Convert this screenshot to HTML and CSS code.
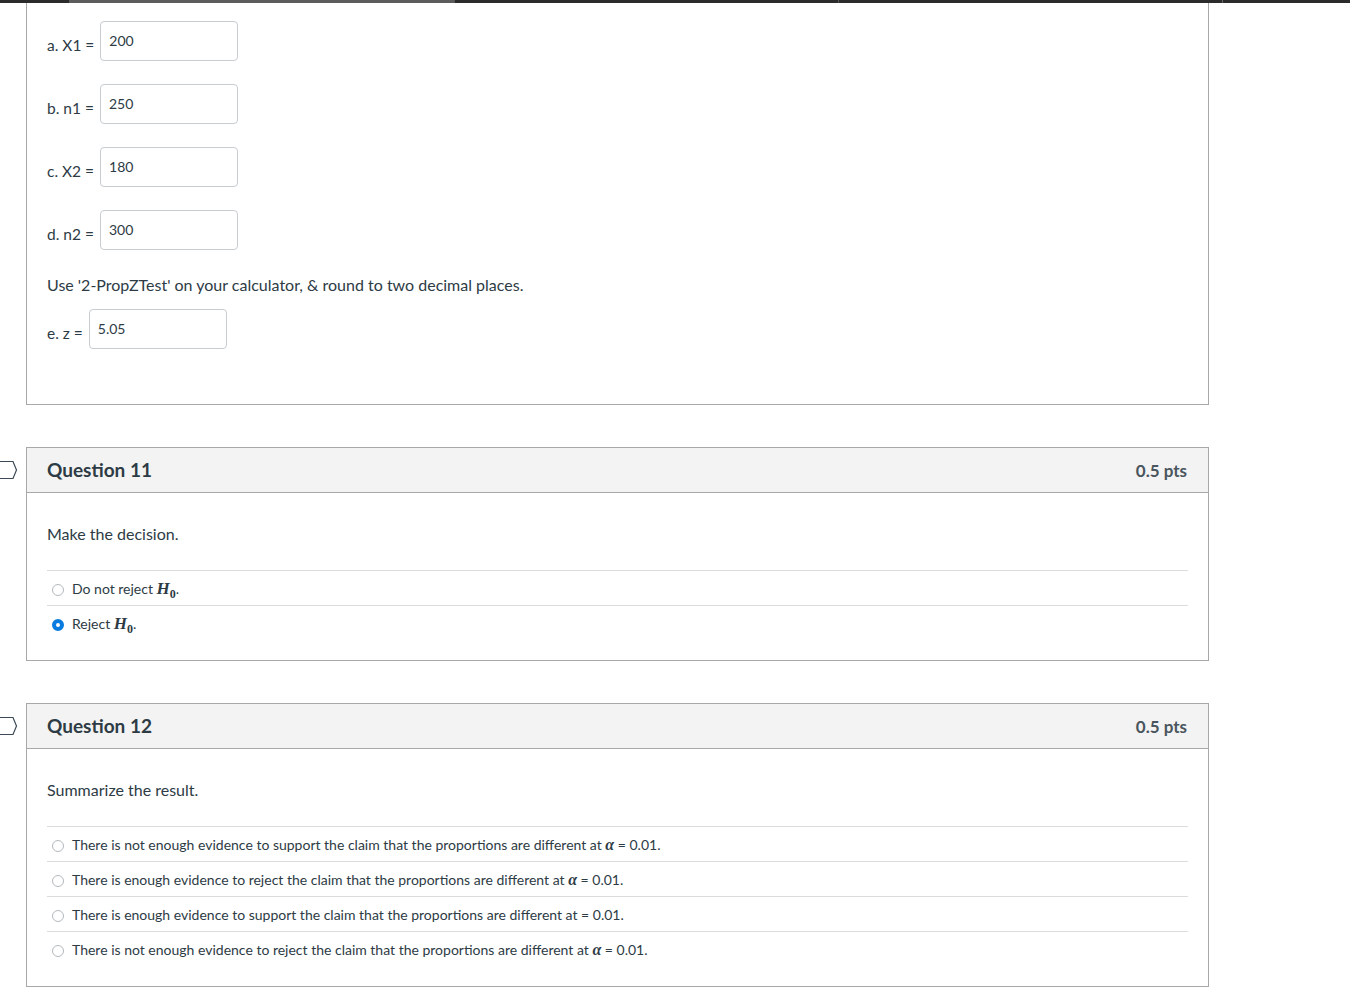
FILE: index.html
```html
<!DOCTYPE html>
<html>
<head>
<meta charset="utf-8">
<link rel="stylesheet" href="styles.css">
</head>
<body>
<div class="topbar">
  <span class="seg seg-a"></span>
  <span class="seg seg-b"></span>
  <span class="seg seg-c"></span>
  <span class="seg seg-d"></span>
  <span class="seg seg-e"></span>
</div>
<main class="quiz">
  <section class="qbox qbox-open">
    <div class="qbody qbody-inputs">
      <div class="field"><span class="flabel">a. X1 =</span><input class="finput" type="text" value="200"></div>
      <div class="field"><span class="flabel">b. n1 =</span><input class="finput" type="text" value="250"></div>
      <div class="field"><span class="flabel">c. X2 =</span><input class="finput" type="text" value="180"></div>
      <div class="field"><span class="flabel">d. n2 =</span><input class="finput" type="text" value="300"></div>
      <p class="qtext qtext-mid">Use '2-PropZTest' on your calculator, &amp; round to two decimal places.</p>
      <div class="field"><span class="flabel">e. z =</span><input class="finput" type="text" value="5.05"></div>
    </div>
  </section>

  <section class="qbox">
    <svg class="flag" width="20" height="20" viewBox="0 0 20 20"><path d="M-4 1.5 H13 L16.5 10 L13 18.5 H-4" fill="none" stroke="#3b4a56" stroke-width="1.2"/></svg>
    <header class="qhead"><h2 class="qtitle">Question 11</h2><span class="qpts">0.5 pts</span></header>
    <div class="qbody">
      <p class="qtext">Make the decision.</p>
      <div class="answers">
        <label class="answer"><span class="radio"></span><span class="atext">Do not reject <span class="math">H<sub>0</sub></span>.</span></label>
        <label class="answer"><span class="radio radio-on"></span><span class="atext">Reject <span class="math">H<sub>0</sub></span>.</span></label>
      </div>
    </div>
  </section>

  <section class="qbox">
    <svg class="flag" width="20" height="20" viewBox="0 0 20 20"><path d="M-4 1.5 H13 L16.5 10 L13 18.5 H-4" fill="none" stroke="#3b4a56" stroke-width="1.2"/></svg>
    <header class="qhead"><h2 class="qtitle">Question 12</h2><span class="qpts">0.5 pts</span></header>
    <div class="qbody">
      <p class="qtext">Summarize the result.</p>
      <div class="answers">
        <label class="answer"><span class="radio"></span><span class="atext">There is not enough evidence to support the claim that the proportions are different at <span class="alpha">α</span> = 0.01.</span></label>
        <label class="answer"><span class="radio"></span><span class="atext">There is enough evidence to reject the claim that the proportions are different at <span class="alpha">α</span> = 0.01.</span></label>
        <label class="answer"><span class="radio"></span><span class="atext">There is enough evidence to support the claim that the proportions are different at = 0.01.</span></label>
        <label class="answer"><span class="radio"></span><span class="atext">There is not enough evidence to reject the claim that the proportions are different at <span class="alpha">α</span> = 0.01.</span></label>
      </div>
    </div>
  </section>
</main>
</body>
</html>
```

FILE: styles.css
```css
* { box-sizing: border-box; }
html, body { margin: 0; padding: 0; background: #fff; }
body {
  font-family: Lato, "Open Sans", "Liberation Sans", sans-serif;
  color: #2d3b45;
  width: 1350px;
  height: 999px;
  overflow: hidden;
}
.topbar {
  display: flex;
  height: 3px;
  background: #2b2b2b;
}
.seg { display: block; height: 3px; }
.seg-a { width: 69px; background: #2b2b2b; }
.seg-b { width: 385px; background: #5c5c5c; }
.seg-c { width: 384px; background: #2b2b2b; border-left: 1px solid #555; }
.seg-d { width: 384px; background: #2b2b2b; border-left: 1px solid #555; }
.seg-e { flex: 1; background: #2b2b2b; border-left: 1px solid #666; }

.quiz {
  margin-left: 26px;
  width: 1183px;
  display: flex;
  flex-direction: column;
  gap: 42px;
}
.qbox {
  position: relative;
  border: 1px solid #a8a8a8;
  background: #fff;
}
.qbox-open { border-top: none; }
.flag {
  position: absolute;
  left: -27px;
  top: 12px;
  overflow: visible;
}
.qhead {
  display: flex;
  justify-content: space-between;
  align-items: center;
  height: 45px;
  padding: 0 20px 1px;
  background: #f3f3f3;
  border-bottom: 1px solid #a8a8a8;
}
.qtitle {
  margin: 0;
  font-size: 19px;
  font-weight: 700;
  color: #2d3b45;
}
.qpts {
  font-size: 17px;
  font-weight: 700;
  color: #4a555d;
  padding-top: 1px;
  margin-right: 1px;
}
.qbody {
  padding: 30px 20px 20px;
}
.qbody-inputs {
  padding: 18px 20px 55px;
  display: flex;
  flex-direction: column;
  align-items: flex-start;
}
.field {
  display: flex;
  align-items: center;
  gap: 6px;
}
.field + .field { margin-top: 23px; }
.flabel {
  font-size: 15.5px;
  line-height: 20px;
  margin-top: 8px;
}
.finput {
  width: 138px;
  height: 40px;
  border: 1px solid #c7cdd1;
  border-radius: 4px;
  padding: 0 8px 2px;
  font-family: Lato, "Open Sans", "Liberation Sans", sans-serif;
  font-size: 14px;
  color: #2d3b45;
  background: #fff;
}
.qtext {
  margin: 0;
  font-size: 16px;
  line-height: 22px;
}
.qtext-mid {
  margin: 24px 0 13px;
}
.answers {
  margin-top: 25px;
}
.answer {
  display: flex;
  align-items: center;
  height: 35px;
  padding: 1px 0 0 5px;
  border-top: 1px solid #dcdcdc;
  font-size: 14px;
}
.radio {
  width: 12px;
  height: 12px;
  border-radius: 50%;
  border: 1px solid #b3b9bd;
  background: #fff;
  margin-right: 8px;
  flex: none;
  margin-top: 3px;
}
.radio-on {
  border: 4px solid #0a7ce0;
  background: #fff;
  width: 12px;
  height: 12px;
}
.atext { white-space: nowrap; }
.math {
  font-family: "Liberation Serif", "DejaVu Serif", serif;
  font-style: italic;
  font-weight: 700;
  font-size: 17px;
}
.math sub {
  font-style: normal;
  font-size: 12px;
  vertical-align: -4px;
  line-height: 0;
}
.alpha {
  font-family: "Liberation Serif", "DejaVu Serif", serif;
  font-style: italic;
  font-weight: 700;
  font-size: 16px;
  line-height: 0;
}
```
